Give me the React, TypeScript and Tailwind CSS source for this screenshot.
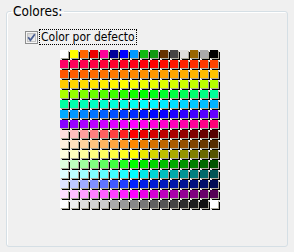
import React from "react";

const ROW1 = ["#ffffff","#ffff00","#ff6600","#ee0000","#ff0099","#000099","#0000ff","#0099ff","#11bb11","#119911","#663300","#444444","#dddddd","#996600","#aaaaaa","#000000"];
const ROW16 = ["#ffffff","#eeeeee","#dddddd","#d2d2d2","#cccccc","#aaaaaa","#999999","#888888","#777777","#606060","#555555","#444444","#2e2e2e","#1e1e1e","#111111","#ffffff"];

function toHex(r: number, g: number, b: number) {
  const h = (v: number) => Math.round(Math.max(0, Math.min(255, v))).toString(16).padStart(2, "0");
  return "#" + h(r) + h(g) + h(b);
}

function hsv(hue: number): [number, number, number] {
  const hh = ((hue % 360) + 360) % 360;
  const x = 1 - Math.abs(((hh / 60) % 2) - 1);
  const s = Math.floor(hh / 60);
  const t: [number, number, number][] = [
    [1, x, 0], [x, 1, 0], [0, 1, x], [0, x, 1], [x, 0, 1], [1, 0, x],
  ];
  const [r, g, b] = t[s];
  return [r * 255, g * 255, b * 255];
}

const hueRows: [number, number][] = [
  [336, 376],
  [20, 46],
  [48, 78],
  [80, 156],
  [158, 198],
  [200, 264],
  [272, 332],
];

const bases: [number, number, number][] = [
  [255, 0, 0],
  [255, 136, 0],
  [255, 255, 0],
  [0, 255, 0],
  [0, 255, 255],
  [0, 34, 255],
  [255, 0, 255],
];

function buildColors(): string[][] {
  const rows: string[][] = [ROW1];
  for (const [a, b] of hueRows) {
    const r: string[] = [];
    for (let i = 0; i < 16; i++) {
      const [R, G, B] = hsv(a + ((b - a) * i) / 15);
      r.push(toHex(R, G, B));
    }
    rows.push(r);
  }
  for (const [R, G, B] of bases) {
    const r: string[] = [];
    for (let k = 0; k < 8; k++) {
      const w = (7 - k) / 8;
      r.push(toHex(R + (255 - R) * w, G + (255 - G) * w, B + (255 - B) * w));
    }
    for (let j = 0; j < 8; j++) {
      const f = 1 - (j + 1) / 12;
      r.push(toHex(R * f, G * f, B * f));
    }
    rows.push(r);
  }
  rows.push(ROW16);
  return rows;
}

const COLORS = buildColors();

function CheckBox() {
  return (
    <svg width="13" height="13" viewBox="0 0 13 13" className="shrink-0">
      <defs>
        <linearGradient id="cbg" x1="0" y1="0" x2="1" y2="1">
          <stop offset="0" stopColor="#d4d4d4" />
          <stop offset="1" stopColor="#f6f6f6" />
        </linearGradient>
      </defs>
      <rect x="0.5" y="0.5" width="12" height="12" fill="#f4f4f4" stroke="#8e8f8f" />
      <rect x="2.5" y="2.5" width="8" height="8" fill="url(#cbg)" stroke="#c4c4c4" />
      <path d="M3.2 6.3 L5.4 9.2 L9.8 3.2" fill="none" stroke="#4a5f92" strokeWidth="1.8" />
    </svg>
  );
}

export default function App() {
  return (
    <div
      className="w-[294px] h-[252px] bg-[#f0f0f0] px-[6px] pt-[3px] text-black"
      style={{ fontFamily: '"DejaVu Sans Condensed", "DejaVu Sans", sans-serif', fontStretch: "condensed" }}
    >
      <fieldset className="h-[244px] border border-[#d5dfe5] rounded-[3px] shadow-[inset_1px_1px_0_#ffffff]">
        <legend className="ml-[4px] px-[2px] text-[13.5px] leading-[16px]">Colores:</legend>
        <div className="mt-[10px] ml-[18px] flex items-center h-[16px]">
          <CheckBox />
          <span className="ml-[1px] border border-dotted border-black px-[1px] text-[12px] leading-[14px] h-[16px]">
            Color por defecto
          </span>
        </div>
        <div className="mt-[5px] ml-[53px] grid grid-cols-[repeat(16,10px)] auto-rows-[10px] w-[160px]">
          {COLORS.flatMap((row, ri) =>
            row.map((c, ci) => (
              <div key={ri + "-" + ci} className="w-[10px] h-[10px]">
                <div
                  className="w-[8px] h-[8px] shadow-[1px_1px_0_#aca899,2px_2px_0_#000000]"
                  style={{ backgroundColor: c }}
                />
              </div>
            ))
          )}
        </div>
      </fieldset>
    </div>
  );
}
